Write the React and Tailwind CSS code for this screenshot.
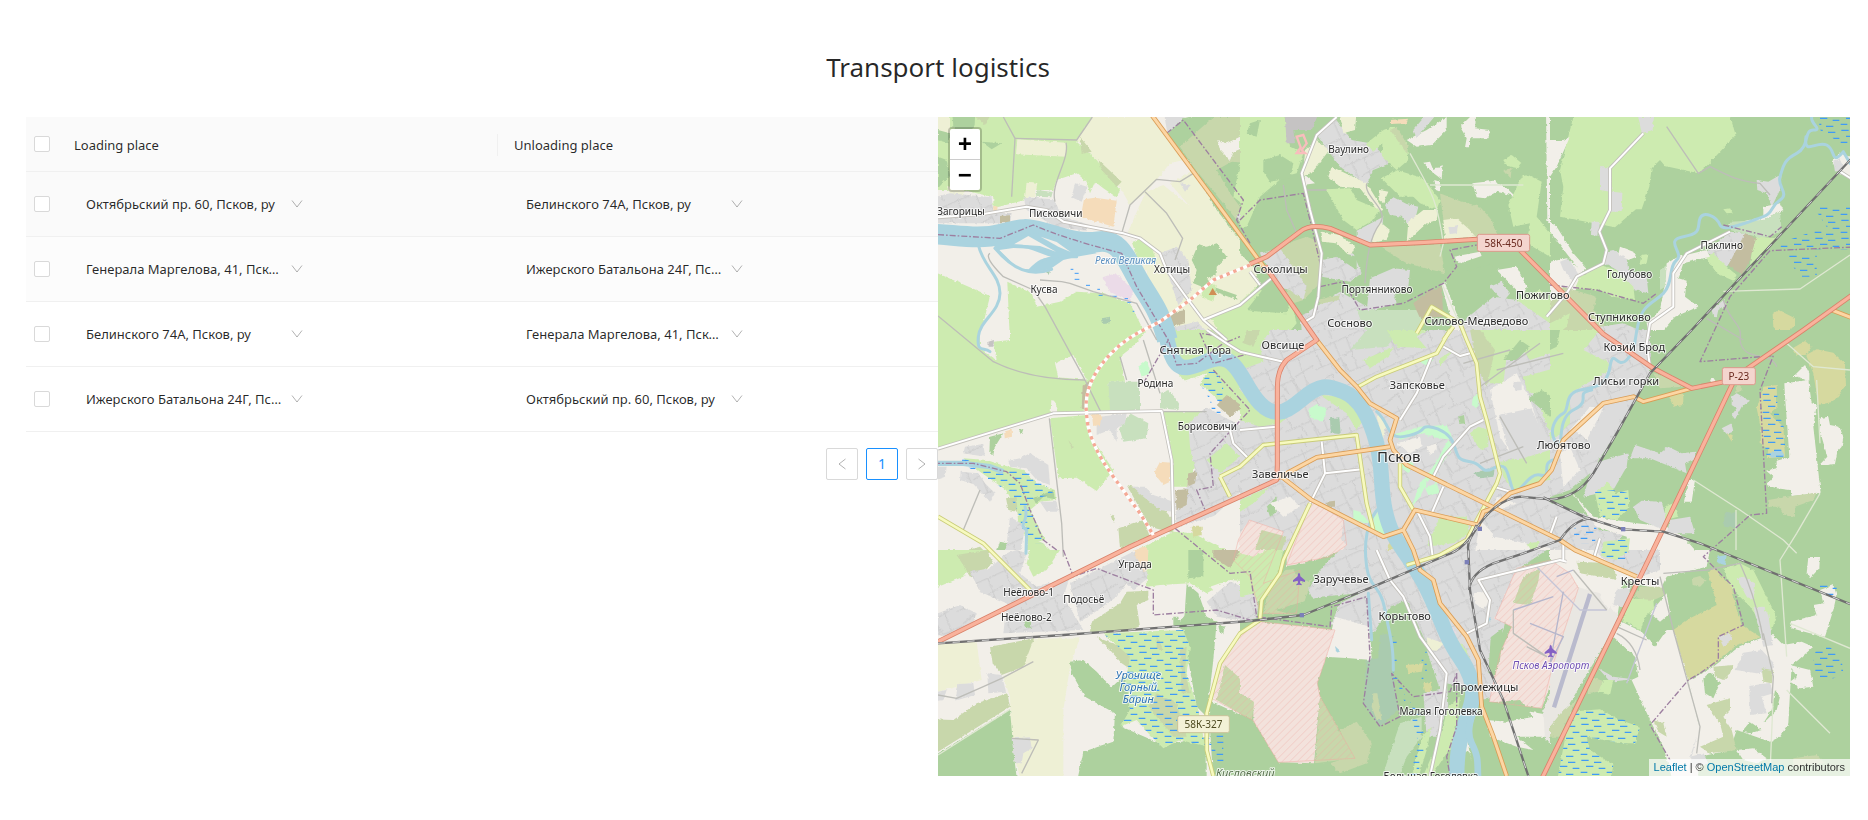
import React from "react";

/* ---------- Map data: one unit is a third of a pixel ---------- */

const FILL = {
  forest: "#add19e",
  grass: "#cdebb0",
  farm: "#eef0d5",
  land: "#f2efe9",
  scrub: "#c8d7ab",
  heath: "#d6d99f",
  orchard: "#f5dcba",
  industry: "#ebdbe8",
  park: "#c8facc",
  meadow: "#c8e0be",
  cemetery: "#aacbaf",
  pink: "#f3e2dc",
  plain: "#dcdcdc",
  apron: "#e9e7e2",
  stone: "#c5c3c3",
  brown: "#c3bda0",
  town: "url(#streets)",
  water: "#aad3df",
};

const LAND = [
  {
    at: "translate(0 0)",
    areas: [
      ["land", "0,0 960,0 960,700 0,700"],
      ["grass", "0,0 487,21 440,100 395,160 370,240 310,240 285,270 190,295 190,262 100,240 0,240"],
      ["farm", "0,0 60,0 60,70 40,90 0,80"],
      ["farm", "262,88 408,98 408,140 258,133"],
      ["farm", "290,215 322,218 316,262 285,262"],
      ["meadow", "322,240 368,246 364,262 318,260"],
      ["farm", "487,21 665,21 960,430 960,700 720,700 690,580 640,470 655,400 580,370 600,285 575,240 500,150 440,90"],
      ["land", "760,150 790,180 720,220 780,290 700,225 650,245 720,160"],
      ["land", "600,285 645,250 590,375 560,370"],
      ["grass", "440,95 500,150 570,240 560,262 520,235 495,215 480,250 470,215 440,190 380,210 370,200 410,130"],
      ["scrub", "450,80 485,125 455,132"],
      ["scrub", "505,150 575,215 560,230 515,180"],
      ["forest", "66,0 136,0 134,45 105,92 70,50"],
      ["scrub", "110,0 190,0 165,45"],
      ["forest", "155,95 215,100 185,118"],
      ["forest", "24,140 50,150 60,195 24,235"],
      ["forest", "24,60 60,70 55,100 24,90"],
      ["farm", "50,228 105,240 100,262 60,250"],
      ["plain", "700,0 780,0 735,65 712,68"],
      ["forest", "712,72 760,25 870,0 960,0 960,430 860,300 780,160"],
      ["scrub", "850,21 960,21 960,160 905,155 860,180 900,250 930,290 920,330 790,170 750,110"],
      ["land", "862,90 890,100 930,80 935,115 912,125 900,150 870,120"],
      ["grass", "930,160 960,140 960,300 910,260"],
      ["plain", "920,320 960,270 960,360 940,350"],
      ["forest", "805,402 830,410 860,400 890,440 860,470 860,495 830,505 850,530 920,555 922,570 840,540 790,520 800,480 785,450"],
      ["grass", "830,520 860,525 850,575 810,560"],
      ["grass", "605,395 640,385 665,410 680,460 620,440"],
      ["town", "690,430 740,410 775,450 785,540 745,585 720,510"],
      ["grass", "840,620 960,575 960,700 880,690"],
      ["brown", "720,610 765,600 765,640 725,650"],
      ["town", "720,655 800,635 870,700 700,700"],
      ["grass", "0,480 180,558 165,620 145,700 0,700"],
      ["grass", "232,515 305,550 320,590 390,575 440,545 520,550 600,580 640,660 655,700 240,700"],
      ["town", "0,265 60,250 185,262 190,305 245,310 240,340 0,340"],
      ["town", "280,262 370,268 400,320 480,345 470,362 380,352 290,300"],
      ["brown", "210,318 240,316 240,338 210,340"],
      ["plain", "435,220 472,230 455,275 425,262"],
      ["orchard", "462,268 495,263 560,272 550,350 500,335 452,322"],
      ["orchard", "190,288 206,290 204,306 190,306"],
      ["plain", "750,220 782,225 765,245"],
      ["industry", "518,502 555,489 610,540 600,575 540,545"],
      ["cemetery", "515,625 540,620 540,640 520,642"],
      ["cemetery", "342,486 360,484 356,494"],
    ],
  },
  {
    at: "translate(930 0)",
    areas: [
      ["forest", "0,0 960,0 960,700 0,700"],
      ["grass", "0,0 130,0 150,110 190,130 170,190 130,200 60,260 20,350 0,350"],
      ["forest", "70,150 120,135 160,160 150,205 90,215 70,185"],
      ["forest", "30,40 60,30 50,80 20,70"],
      ["stone", "135,20 240,0 215,60 160,60 165,100 140,100"],
      ["farm", "195,120 230,90 268,120 215,190 190,195"],
      ["land", "195,195 225,220 190,225"],
      ["town", "230,75 285,25 335,90 390,100 460,155 400,180 380,225 300,170 270,130"],
      ["farm", "297,0 350,0 345,60 310,70"],
      ["farm", "275,170 380,220 430,300 415,305 360,235 300,230 265,200"],
      ["grass", "425,205 470,180 550,205 600,270 590,300 540,280 520,260 480,260"],
      ["grass", "258,238 330,235 350,270 420,300 400,330 350,360 310,330"],
      ["grass", "430,60 460,50 500,100 505,150 470,180 425,140"],
      ["grass", "380,100 430,60 440,90 400,125"],
      ["scrub", "450,60 470,50 505,110 500,130"],
      ["land", "500,90 560,60 620,21 620,60 575,105 530,110"],
      ["plain", "520,60 570,0 600,0 530,85"],
      ["orchard", "450,30 505,26 500,40 450,42"],
      ["land", "660,50 690,21 708,21 705,55 750,60 745,85 690,85 690,112 675,112 680,85"],
      ["land", "550,158 570,155 580,180 608,165 605,208 575,185"],
      ["land", "583,210 600,215 600,245 588,240"],
      ["land", "697,220 760,212 800,235 825,258 770,245 735,265 710,262"],
      ["grass", "790,150 815,135 845,160 835,175 800,168"],
      ["scrub", "790,180 815,175 812,205"],
      ["land", "918,0 930,0 935,130 960,130 940,210 935,320 960,350 960,370 922,335"],
      ["grass", "805,285 845,200 865,195 905,215 890,320 940,380 930,440 860,400 870,340 820,350"],
      ["scrub", "600,250 650,270 720,290 755,330 772,375 640,385 610,330"],
      ["farm", "610,330 650,325 690,360 710,385 615,388"],
      ["plain", "625,352 655,345 650,370 630,372"],
      ["plain", "435,285 460,262 500,282 535,290 525,330 505,345 485,320 450,315"],
      ["farm", "420,240 445,245 430,280 416,270"],
      ["farm", "550,300 595,300 590,330 560,340 500,395 505,335"],
      ["plain", "350,362 430,320 425,370 385,405 350,395"],
      ["farm", "420,335 450,360 440,390 390,400"],
      ["farm", "245,365 300,375 345,410 330,440 290,400 245,395"],
      ["scrub", "110,410 200,380 240,395 240,520 190,570 130,590 150,500"],
      ["town", "60,430 120,415 200,530 190,570 150,540 110,530"],
      ["town", "245,450 340,430 365,490 330,515 245,500"],
      ["forest", "245,410 350,440 350,480 290,440"],
      ["scrub", "420,410 600,400 615,490 500,460"],
      ["plain", "390,505 460,475 510,480 505,530 460,545 470,580 380,605"],
      ["town", "180,620 300,545 400,600 400,700 190,700"],
      ["scrub", "230,570 300,555 295,570 240,582"],
      ["meadow", "350,600 560,600 520,700 390,700"],
      ["brown", "520,580 560,545 605,530 610,620 540,625"],
      ["grass", "0,500 60,540 150,560 170,640 120,700 0,700"],
      ["forest", "20,600 90,510 150,570 140,610 60,605"],
      ["farm", "0,430 40,470 60,520 0,575"],
      ["land", "640,440 720,425 725,438 660,460"],
      ["land", "770,480 830,470 860,530 850,560 790,500"],
      ["land", "605,525 615,520 680,690 650,690"],
      ["town", "680,625 760,560 830,570 960,600 960,700 640,700"],
      ["forest", "620,500 760,460 740,560 690,600 660,580"],
      ["plain", "750,530 785,515 810,550 790,575"],
      ["grass", "830,570 900,540 960,600 930,640"],
    ],
  },
  {
    at: "translate(1860 0)",
    areas: [
      ["forest", "0,0 960,0 960,700 0,700"],
      ["grass", "75,0 535,0 557,75 470,168 445,190 345,168 330,150 305,175 298,230 275,298 258,298 195,352 30,320 40,230 30,180"],
      ["land", "0,90 40,90 60,80 20,170 0,200"],
      ["plain", "265,21 312,21 308,60 275,70"],
      ["plain", "150,172 180,172 185,245 217,248 215,305 180,305 180,245 150,240"],
      ["plain", "125,335 150,335 145,378 123,375"],
      ["land", "0,335 20,350 70,430 110,475 95,490 0,365"],
      ["plain", "620,210 655,215 695,192 690,240 665,290 650,250 622,240"],
      ["land", "640,290 690,280 700,300 640,330 560,345 530,345 640,320"],
      ["meadow", "540,335 640,330 690,305 695,365 640,385 540,360"],
      ["land", "845,155 870,130 900,140 900,200 870,190"],
      ["plain", "850,155 870,145 880,180 855,185"],
      ["town", "470,425 540,365 585,370 590,390 530,470"],
      ["brown", "585,370 620,385 605,430 600,450 575,495 535,465"],
      ["grass", "620,380 680,385 600,465 605,430"],
      ["grass", "467,440 490,430 530,470 560,495 550,512 500,490"],
      ["land", "385,440 470,420 480,440 400,460 385,505 410,512 405,560 445,590 375,620 340,660 300,690 290,640 330,600 345,520 350,460"],
      ["land", "0,455 50,445 90,478 110,500 60,560 0,615"],
      ["plain", "30,455 55,445 90,500 70,515 40,480"],
      ["plain", "165,425 190,420 230,445 235,480 290,500 295,550 250,540 200,480 165,460"],
      ["land", "210,410 250,425 260,440 235,450 205,432"],
      ["grass", "150,465 200,480 250,530 255,570 190,560 150,540 75,535 90,500"],
      ["meadow", "330,480 350,465 345,530 330,540"],
      ["scrub", "0,575 40,530 140,560 130,600 160,640 190,700 0,700"],
      ["grass", "0,640 60,610 50,650 0,690"],
      ["town", "150,650 220,640 280,665 300,700 170,700"],
      ["grass", "275,435 295,432 290,460 268,465"],
      ["grass", "520,298 540,295 548,308 530,310"],
      ["heath", "668,612 685,600 705,610 735,625 735,645 700,680 670,650"],
      ["plain", "485,600 520,570 530,585 505,600 500,622 490,620"],
    ],
  },
  {
    at: "translate(0 660)",
    areas: [
      ["land", "0,0 960,0 960,700 0,700"],
      ["grass", "0,0 650,0 615,45 570,80 585,155 535,155 545,240 375,250 0,362"],
      ["land", "150,0 240,0 240,30 190,35 200,90 150,55"],
      ["stone", "175,35 192,30 190,50 176,50"],
      ["land", "375,100 430,75 470,150 385,142"],
      ["land", "364,210 375,215 385,245 362,248"],
      ["brown", "458,170 480,150 468,245 455,235"],
      ["grass", "360,265 470,255 490,330 550,420 500,483 440,443 385,445"],
      ["meadow", "535,155 630,155 630,240 540,240"],
      ["meadow", "568,295 600,250 655,280 650,325 580,335"],
      ["meadow", "690,190 715,180 748,215 745,240 690,235"],
      ["park", "625,110 650,90 662,130 635,140"],
      ["plain", "500,262 590,250 585,280 560,295 560,335 540,300 500,315"],
      ["orchard", "485,252 515,255 510,285 490,288"],
      ["orchard", "672,430 690,395 722,398 720,455 700,465"],
      ["grass", "700,0 810,0 960,0 960,250 900,240 820,170 760,150 720,100"],
      ["grass", "700,245 800,245 850,250 880,320 800,400 770,470 730,470 728,380"],
      ["land", "830,130 800,180 820,240 760,240 700,150 740,160"],
      ["scrub", "590,465 650,480 730,570 730,610 660,590"],
      ["plain", "605,470 645,470 670,495 730,515 728,545 690,540 640,500"],
      ["town", "775,280 830,230 880,260 960,300 960,460 850,560 740,590 735,510 800,440 780,350"],
      ["grass", "830,390 890,340 930,380 870,430 850,410"],
      ["brown", "735,480 775,478 770,525 740,540"],
      ["brown", "775,430 800,425 795,460 772,470"],
      ["brown", "860,225 890,195 940,230 900,260"],
      ["grass", "730,605 790,610 960,700 530,700 640,650"],
      ["land", "790,580 960,520 960,610 860,600 870,650"],
      ["scrub", "565,595 640,570 660,620 570,655"],
      ["orchard", "620,655 650,650 662,700 635,700"],
      ["grass", "100,385 170,390 215,405 280,420 320,460 375,480 378,510 330,515 300,540 345,630 300,640 265,590 262,540 228,480 150,425"],
      ["scrub", "228,505 260,500 262,545 235,540"],
      ["forest", "310,505 370,480 375,508 340,500 318,522"],
      ["forest", "180,320 220,310 195,350 190,375 178,370"],
      ["orchard", "222,305 245,298 246,320 225,325"],
      ["plain", "235,392 270,385 300,370 355,405 360,465 320,450 290,415 240,410"],
      ["town", "92,425 145,430 165,460 195,490 180,515 130,462 90,450"],
      ["town", "105,350 160,342 165,380 100,370"],
      ["plain", "330,515 380,515 385,545 350,545"],
      ["plain", "24,410 50,410 45,440 24,448"],
      ["town", "240,560 290,590 280,620 265,700 205,700 230,640"],
      ["forest", "210,635 232,640 220,680 195,680"],
      ["grass", "295,620 340,640 400,700 280,700"],
      ["scrub", "90,665 150,650 200,700 70,700"],
      ["heath", "785,590 815,590 815,615 790,620"],
      ["pink", "925,630 960,590 960,690 930,680"],
      ["scrub", "415,330 432,352 425,355"],
      ["scrub", "540,552 555,565 550,578"],
      ["forest", "265,300 280,298 275,312"],
    ],
  },
  {
    at: "translate(930 660)",
    areas: [
      ["town", "0,0 960,0 960,700 0,700"],
      ["grass", "0,0 90,0 60,50 70,95 0,120"],
      ["scrub", "20,0 60,0 40,50 10,40"],
      ["meadow", "330,60 380,0 480,0 440,50"],
      ["grass", "370,90 460,50 450,75 390,115"],
      ["grass", "440,0 560,0 530,20 560,55 470,50"],
      ["grass", "600,85 640,60 600,110"],
      ["grass", "700,0 960,0 960,60 870,90 850,60 800,80 790,160 745,160"],
      ["forest", "790,90 840,30 870,50 830,90"],
      ["scrub", "690,0 720,0 765,60 740,170 715,120"],
      ["grass", "850,140 960,110 960,330 920,290 890,200 860,180"],
      ["forest", "865,205 905,180 935,200 930,260"],
      ["land", "750,180 830,130 870,210 900,300 830,400 780,320"],
      ["plain", "775,255 875,235 925,355 820,402"],
      ["plain", "820,155 845,155 845,180 822,182"],
      ["grass", "780,395 850,385 960,350 960,440 820,480 790,440"],
      ["grass", "0,180 60,240 140,240 250,180 180,230 120,280 60,290 0,270"],
      ["grass", "240,195 310,200 370,270 350,300 320,250"],
      ["park", "205,240 225,225 260,235 250,275 210,262"],
      ["cemetery", "270,265 298,262 302,312 272,310"],
      ["park", "455,315 540,290 620,285 640,330 600,325 540,310 480,330"],
      ["park", "625,330 640,350 600,410 560,460 540,500 515,530 540,460 580,410"],
      ["park", "555,475 590,458 600,490 565,495"],
      ["park", "480,380 520,400 505,430 485,415"],
      ["park", "700,200 720,190 712,235 695,225"],
      ["park", "530,90 580,85 565,110"],
      ["park", "400,560 425,540 440,620 405,600"],
      ["park", "340,540 360,545 390,580 340,575"],
      ["farm", "410,250 440,280 430,320 455,580 440,560 425,400"],
      ["land", "470,340 540,320 545,350 510,370"],
      ["land", "560,350 590,340 590,360 570,375"],
      ["grass", "690,310 715,290 745,300 745,350 720,360"],
      ["forest", "655,260 672,255 675,280 658,282"],
      ["cemetery", "700,430 765,410 760,440 720,445"],
      ["grass", "0,510 90,470 40,520 0,545"],
      ["forest", "80,530 110,500 110,545 90,560"],
      ["land", "90,520 150,500 180,530 130,560"],
      ["brown", "260,515 285,512 285,530 262,530"],
      ["pink", "215,510 310,570 305,630 320,645 270,700 130,700"],
      ["pink", "28,570 130,605 95,700 0,700 0,610"],
      ["scrub", "65,600 140,620 115,690 45,660"],
      ["heath", "455,625 475,680 430,680"],
      ["grass", "600,560 680,560 690,610 640,640 560,650"],
      ["land", "720,570 750,600 760,620 960,660 960,700 700,700"],
      ["land", "770,500 830,520 760,545"],
      ["grass", "860,640 900,635 880,670"],
    ],
  },
  {
    at: "translate(1860 660)",
    areas: [
      ["forest", "0,0 960,0 960,700 0,700"],
      ["town", "60,50 140,10 170,0 300,0 300,130 260,200 200,310 120,430 60,480 0,500 0,300"],
      ["grass", "0,0 150,0 100,60 180,100 170,125 60,190 60,280 20,320 0,330"],
      ["forest", "0,0 30,0 20,50 0,60"],
      ["land", "60,300 120,230 160,235 110,330 90,310"],
      ["plain", "175,215 240,215 150,380 110,360"],
      ["land", "30,370 60,350 90,420 40,470"],
      ["scrub", "310,130 370,140 400,170 330,175"],
      ["heath", "355,195 400,190 400,225 370,230"],
      ["plain", "130,400 235,370 230,410 190,480 100,500"],
      ["plain", "240,385 255,345 330,370 355,350 395,370 435,365 435,385 405,400 410,430 300,385"],
      ["grass", "135,490 175,455 195,490 235,480 238,530 200,570 150,560"],
      ["town", "0,515 60,540 130,560 150,600 220,610 180,700 0,700"],
      ["land", "60,480 130,560 260,580 350,590 400,620 470,700 240,700 230,620 140,590"],
      ["plain", "250,530 275,512 335,515 350,570 340,600 270,570"],
      ["plain", "360,570 420,560 435,610 350,610"],
      ["land", "415,450 435,450 425,515 402,515"],
      ["grass", "345,530 370,520 385,560 345,570"],
      ["grass", "160,635 240,625 230,700 150,700"],
      ["plain", "545,200 560,190 600,212 575,230 555,268 545,255 560,235 545,225"],
      ["plain", "515,295 545,280 550,305 530,312"],
      ["heath", "530,310 548,315 545,335"],
      ["land", "480,150 490,143 498,155 485,160"],
      ["land", "703,160 775,150 785,220 800,225 790,290 812,488 725,498 720,480 680,475 650,465 670,440 648,422 680,415 680,392 718,382 712,290 705,200"],
      ["land", "728,142 765,105 778,130 778,155 745,140"],
      ["land", "808,265 835,260 840,285 868,290 880,320 875,350 862,365 855,402 830,405 808,405 832,380 812,310"],
      ["heath", "768,75 800,58 850,68 885,100 888,165 850,215 805,225 790,130"],
      ["heath", "728,55 765,33 785,50 768,75 740,75"],
      ["heath", "640,170 680,165 682,230 660,250 700,290 705,380 650,385 655,360 632,340 632,290 620,235"],
      ["water", "655,372 690,355 705,378 665,383"],
      ["scrub", "655,510 710,500 800,488 790,510 735,530 735,560 700,555 690,530 655,530"],
      ["cemetery", "525,545 560,550 560,595 520,590"],
      ["scrub", "560,160 580,180 555,190"],
    ],
  },
  {
    at: "translate(0 1320)",
    areas: [
      ["land", "0,0 960,0 960,700 0,700"],
      ["grass", "0,0 190,0 130,40 100,80 0,120"],
      ["scrub", "80,15 170,0 190,40 125,85"],
      ["grass", "290,40 300,0 390,0 350,60 310,80"],
      ["town", "120,65 180,55 230,10 260,0 290,10 270,70 320,110 420,80 400,140 430,190 460,240 220,250 230,160 150,125"],
      ["forest", "280,215 300,210 305,235 285,230"],
      ["town", "24,190 90,165 140,190 130,215 50,260 24,255"],
      ["town", "420,100 520,50 600,10 630,0 665,75 610,120 590,100 560,140 490,190 450,215"],
      ["orchard", "610,0 655,0 660,60 640,65"],
      ["grass", "655,0 960,0 960,95 900,90 830,130 780,100 690,105 650,110"],
      ["forest", "775,0 820,0 820,80 775,85"],
      ["brown", "850,0 930,0 900,55 850,20"],
      ["scrub", "485,215 570,160 590,125 655,122 655,150 620,165 630,230 590,245 480,248"],
      ["forest", "770,100 805,130 830,200 860,215 850,330 830,500 800,470 760,250"],
      ["land", "840,110 870,100 960,90 960,130 880,150"],
      ["town", "830,155 900,95 960,120 960,215 860,200"],
      ["farm", "0,285 140,275 155,390 0,432"],
      ["farm", "310,268 450,262 420,350 400,480 400,700 275,700 245,590 240,440 220,380 275,350"],
      ["scrub", "180,290 312,265 280,350 215,375 188,340"],
      ["plain", "85,402 130,400 135,435 75,452"],
      ["plain", "172,370 215,375 228,425 175,430"],
      ["plain", "24,425 50,420 40,450 24,452"],
      ["scrub", "0,508 70,510 140,460 232,430 240,470 0,620"],
      ["forest", "0,625 240,478 250,600 262,700 0,700"],
      ["plain", "245,565 300,562 305,595 280,610 275,640 255,640"],
      ["forest", "420,335 460,330 500,365 545,412 590,370 600,480 575,530 700,585 830,560 830,700 440,700 460,605 550,575 555,490 465,440 425,370"],
      ["forest", "865,225 885,230 880,250 868,245"],
      ["scrub", "500,262 600,300 605,360 575,340 540,300"],
      ["grass", "518,250 760,240 780,290 770,370 805,480 825,588 750,570 700,595 655,550 620,510 570,530 600,480 585,400 600,320"],
      ["scrub", "680,430 740,460 770,560 730,560 655,470"],
      ["scrub", "680,255 700,300 680,300"],
      ["scrub", "750,300 770,290 765,370 780,430 755,430"],
      ["forest", "730,200 745,200 748,215 770,190 800,210 760,240 730,225"],
      ["pink", "960,238 900,300 870,345 845,440 960,508"],
      ["scrub", "885,345 925,380 960,460 960,508 860,450"],
      ["forest", "835,450 960,508 960,700 850,700"],
    ],
  },
  {
    at: "translate(930 1320)",
    areas: [
      ["forest", "0,0 960,0 960,700 0,700"],
      ["grass", "0,0 130,0 115,70 60,150 0,190"],
      ["pink", "0,0 80,0 40,20 0,10"],
      ["town", "0,140 40,130 55,160 50,205 0,215"],
      ["pink", "140,0 310,0 200,40 140,48"],
      ["scrub", "90,100 140,60 220,50 215,90 180,195 70,190"],
      ["forest", "160,60 210,30 240,50 230,80 190,100"],
      ["town", "205,120 240,60 300,0 480,0 560,110 700,380 700,420 620,400 550,260 500,150 450,170 400,250 300,245 240,190"],
      ["forest", "105,180 240,140 360,130 300,160 270,230 180,200"],
      ["town", "520,0 920,0 830,60 790,240 750,330 780,440 720,450 690,340 600,180"],
      ["land", "285,200 390,230 395,330 330,325 255,320"],
      ["water", "285,288 300,302 288,305"],
      ["meadow", "480,520 545,500 545,560 500,620 470,700 420,700"],
      ["cemetery", "380,330 415,325 420,255 450,250 465,420 475,480 420,530 370,462"],
      ["scrub", "400,430 412,430 425,510 410,510 395,470"],
      ["heath", "500,345 550,340 545,365 505,370"],
      ["heath", "550,400 575,395 575,430 555,425"],
      ["farm", "560,262 612,280 590,302 565,300"],
      ["town", "560,300 620,370 625,470 590,560 560,560 550,430 600,420"],
      ["grass", "625,470 660,440 640,580 560,700 540,700 600,560"],
      ["grass", "545,560 575,530 560,600 530,700 510,700"],
      ["pink", "0,245 60,215 180,228 285,240 232,400 240,440 222,640 115,637 40,512 40,455 0,430"],
      ["scrub", "240,440 345,625 225,640"],
      ["scrub", "0,430 42,456 36,508 0,492"],
      ["scrub", "300,540 350,515 395,580 380,640 300,670 270,640 330,620"],
      ["pink", "830,55 960,30 960,330 905,475 748,455 780,310 815,230 765,205"],
      ["scrub", "850,80 900,55 895,95 870,165 820,160"],
      ["forest", "752,262 788,235 780,330 760,380 745,370"],
      ["land", "700,130 740,125 750,150 730,180 705,160"],
      ["water", "745,200 752,205 745,220"],
      ["land", "735,480 840,480 960,500 960,560 830,560 880,600 830,590 750,560"],
      ["forest", "720,460 840,450 880,500 800,515 740,510"],
      ["apron", "910,480 930,430 960,420 960,600 915,570"],
      ["grass", "630,250 680,300 690,345 660,320"],
      ["industry", "600,180 650,250 620,250"],
      ["land", "680,440 700,450 695,500 680,490"],
      ["land", "670,600 680,560 695,640 690,610"],
    ],
  },
  {
    at: "translate(1860 1320)",
    areas: [
      ["forest", "0,0 960,0 960,700 0,700"],
      ["land", "0,0 480,0 470,50 350,80 330,120 220,90 200,210 60,90 0,80"],
      ["town", "130,0 330,0 330,60 260,85 190,50"],
      ["grass", "150,0 240,0 200,30 160,20"],
      ["apron", "80,110 150,130 210,205 0,560 0,110"],
      ["pink", "0,30 60,70 85,115 10,340 0,340"],
      ["scrub", "80,35 190,40 200,90 150,80 90,70"],
      ["land", "150,80 190,95 180,180 155,150"],
      ["plain", "200,120 240,110 235,175 190,165"],
      ["scrub", "270,110 330,110 345,135 300,155 250,140"],
      ["grass", "215,210 245,145 310,150 312,175 285,200 272,242"],
      ["land", "275,245 315,290 350,240 370,240 415,390 445,520 445,700 370,700 340,590 300,510 245,390 265,380 255,320 190,260 215,215"],
      ["land", "300,190 350,130 360,190 330,215"],
      ["plain", "145,355 190,380 250,388 180,395"],
      ["grass", "160,390 190,390 180,435 140,425"],
      ["scrub", "120,380 158,392 145,425 110,430"],
      ["grass", "60,485 150,478 210,510 270,530 255,580 210,580 110,560 120,600 190,645 180,700 20,700"],
      ["scrub", "0,560 30,560 60,490 80,450 40,480 0,530"],
      ["grass", "520,55 570,40 610,60 650,140 680,200 665,240 640,230 600,170 540,110"],
      ["plain", "560,85 580,80 615,100 612,150 590,140"],
      ["heath", "370,240 420,205 500,165 475,70 490,50 545,110 560,180 575,225 632,262 560,285 490,345 415,390"],
      ["forest", "545,130 600,170 620,230 580,220"],
      ["water", "500,20 530,15 525,45 505,40"],
      ["plain", "505,258 540,248 545,270 520,290"],
      ["scrub", "425,85 450,78 470,90 450,110 428,105"],
      ["land", "415,392 490,350 570,288 640,262 670,255 700,285 755,275 790,290 745,330 725,345 720,430 715,520 690,560 660,575 560,540 540,600 450,620 430,700 445,520"],
      ["plain", "610,172 640,170 655,195 668,285 640,290"],
      ["plain", "580,308 635,300 672,340 665,365 620,370 557,360"],
      ["plain", "598,408 660,398 670,430 635,440 650,490 600,495"],
      ["plain", "440,560 420,620 460,610 475,640 415,660"],
      ["scrub", "490,350 550,345 540,370 520,390 495,380"],
      ["scrub", "470,465 540,445 540,480 520,500 545,540 560,600 480,610 450,590 520,560 510,520 480,480"],
      ["scrub", "635,355 670,360 665,400 640,395"],
      ["forest", "460,385 480,365 510,400 490,445 465,430"],
      ["forest", "575,545 600,515 635,540 600,550"],
      ["forest", "640,520 680,480 690,440 675,420 665,480"],
      ["land", "720,215 800,195 790,165 820,160 810,120 850,105 860,135 850,180 825,260 780,250 725,235"],
      ["land", "720,345 780,360 790,410 750,415 720,395 740,380"],
      ["forest", "790,310 830,280 875,330 880,370 830,395 790,375"],
      ["land", "775,21 810,21 808,55 780,85 770,70"],
      ["land", "560,600 610,595 650,625 620,640 580,630"],
      ["scrub", "730,625 800,615 825,640 730,650"],
      ["scrub", "310,510 340,520 350,560 325,545"],
    ],
  },
];

const MARSH = [
  "M2665,20H2770V105H2740L2670,60Z",
  "M2650,290H2770V420H2545L2560,395L2690,350Z",
  "M2562,430H2660V500H2610Z",
  "M2500,825H2542V900L2565,960V1040H2510L2490,900Z",
  "M1995,1145L2060,1140L2095,1150L2090,1210L2020,1225Z",
  "M1935,1245H2000L1995,1300H1930Z",
  "M2015,1290H2100L2085,1350H2015Z",
  "M60,1030L190,1080L290,1080L350,1130L370,1150L310,1170L310,1230L350,1300H290L262,1200L228,1140L140,1090Z",
  "M518,1570L760,1560L780,1610L770,1690L805,1800L825,1908L750,1890L700,1915L655,1870L620,1830L570,1850L600,1800L585,1720L600,1640Z",
  "M1920,1805L2010,1798L2130,1850L2115,1900L2070,1900L1970,1880L1980,1920L2050,1965L2040,2020L1880,2020Z",
  "M2650,1630L2690,1600L2735,1650L2740,1690L2690,1715L2650,1695Z",
  "M1385,1580H1400L1400,1680L1425,1760L1480,1820L1485,1920L1460,2000H1440L1465,1900L1440,1800L1390,1720Z",
  "M1475,1620H1490V1710H1475Z",
  "M825,1870L880,1850L880,1960H860Z",
  "M2650,1420H2720V1460H2680Z",
  "M830,785H860L880,830L870,920H850L840,870L815,830Z",
];

const MILITARY = [
  "M930,1565L990,1535L1110,1548L1215,1560L1162,1720L1170,1760L1275,1945L1045,1957L970,1832L845,1765L870,1665L900,1610Z",
  "M1145,1170L1240,1230L1250,1305L1200,1340L1070,1365Z",
  "M958,1230L1060,1265L1000,1420L1110,1380L1100,1510L990,1510L960,1400L910,1350L925,1290Z",
  "M1760,1375L1860,1350L1920,1390L1945,1435L1870,1660L1835,1795L1678,1775L1710,1630L1745,1550L1695,1525Z",
];

const STREAMS = [
  "M145,405C160,470 210,495 210,550S150,630 145,680S160,710 180,725",
  "M195,415C250,480 300,500 365,478",
  "M240,408C320,405 320,430 380,440H440",
  "M300,480C340,440 350,450 380,440",
  "M1340,905C1370,930 1370,960 1390,975S1470,970 1480,955S1555,960 1570,1000S1580,1050 1620,1055S1650,1095 1690,1075S1730,1080 1745,1130S1790,1085 1830,1095S1830,1060 1870,1050S1870,930 1930,900S1930,850 1985,840",
  "M1880,1000C1850,960 1880,920 1900,910S1900,850 1950,840S2030,830 2040,770S2060,780 2090,750S2110,700 2125,640S2170,580 2200,550S2215,470 2240,450S2200,390 2260,380S2300,350 2310,325S2360,320 2370,345S2470,330 2500,320S2520,290 2550,270S2540,230 2550,200S2560,150 2600,130S2620,60 2650,60S2640,40 2645,21",
  "M2628,80C2620,140 2660,90 2690,105S2700,170 2740,125L2760,160",
  "M1350,1190C1310,1230 1300,1300 1310,1370S1350,1420 1365,1500S1390,1600 1390,1680",
  "M1315,1450L1325,1590",
  "M285,1190C300,1240 260,1240 290,1260L288,1330",
];

const MINOR = [
  "M220,21L255,85L245,260",
  "M487,21L440,90L255,85",
  "M408,98C420,150 360,220 375,275",
  "M575,370L600,285L680,208L750,215L790,190",
  "M645,245L710,310L758,385L735,450",
  "M24,618L190,755Q300,810 465,810",
  "M310,540L345,590L465,810L512,905",
  "M180,430Q160,440 220,500L310,540",
  "M330,510L395,515L420,520L490,545L620,580L680,690",
  "M358,925L395,1240L400,1340",
  "M150,1140L100,1260",
  "M24,1755L80,1765L160,1730L215,1705L310,1655",
  "M275,1990L325,1890L245,1885",
  "M570,740L590,810M640,690L690,850",
  "M700,905H830",
  "M1060,225L1070,300L1100,370M1120,240H1190",
  "M1310,220C1300,260 1380,300 1350,340S1310,440 1305,520",
  "M2210,50L2305,190L2340,170C2400,200 2430,215 2490,220L2520,255",
  "M2330,625L2440,690M2380,570C2400,640 2440,640 2430,690C2440,760 2520,720 2540,770",
  "M2190,1400L2230,1560L2310,1850L2300,1930",
  "M2500,1570L2530,1700L2525,1780",
  "M2200,1390L2330,1380L2430,1360Q2480,1470 2500,1590",
  "M2060,1550L2150,1590M2060,1570Q2120,1600 2130,1680",
  "M1750,1500V1570L1850,1640L1790,1610",
  "M1930,1380L2030,1500",
  "M1700,780L1900,730M1650,1060L1780,1010M1600,760L1740,720",
  "M1650,830L1830,700M1710,920L1790,1060",
];

const TRACKS = [
  "M1440,130C1500,240 1520,260 1540,400L1530,440",
  "M1500,225H1780",
  "M2380,544L2610,537L2760,435",
  "M2570,700L2650,770L2760,780",
  "M2290,1110L2430,1200L2560,1290L2600,1330",
  "M2670,1150L2600,1270L2550,1350L2570,1640",
  "M2570,1740L2700,1870M2580,1540L2760,1615M2530,1750L2520,1990",
  "M1535,520L1610,690M2660,810L2670,1000",
  "M24,1935L240,1798",
  "M2418,1200V1320",
];

const BORDERS = [
  "M24,374L210,385L310,345Q400,385 575,430L620,530L715,690L740,765L800,760L880,700L930,680",
  "M640,820L715,690",
  "M710,70L760,30L940,270L920,330L960,400",
  "M930,330L990,270L1120,250L1145,350L1175,480L1160,600",
  "M1170,530L1240,515L1290,600L1420,580L1540,520L1580,470L1560,420L1640,405",
  "M2380,345L2520,380L2555,350",
  "M1860,525L2000,540L2140,580L2180,550",
  "M2800,410L2520,422L2400,560L2310,755L2530,737L2490,840L2510,1210L2460,1215L2400,1270L2320,1340L2410,1430L2440,1545L2365,1580L2365,1650L2310,1690L2275,1710L2160,1845L2220,1950",
  "M850,780L960,900L840,1030L850,1130L800,1140L825,1200",
  "M400,1320L430,1400L500,1375L670,1440V1515L860,1500L960,1530",
  "M380,1320L340,1290L300,1200L270,1120L230,1085L130,1060H24",
  "M735,1255L900,1390L960,1385L980,1520L1200,1550L1205,1490L1310,1460L1320,1640L1300,1780L1350,1850L1410,1820L1385,1690L1450,1760L1560,1745L1580,1690",
  "M1580,1690L1580,1850L1550,1940L1560,1998",
  "M880,680L810,670L850,760L960,730",
];

const WHITE = [
  "M24,322L160,312L290,290L350,300L400,335L580,370L630,385L690,430L710,480L775,570L820,630L890,690",
  "M820,630L930,585L1000,525L1030,500M990,525L960,485",
  "M1220,21L1160,75L1115,190L1140,300L1175,430L1165,560L1150,620L1125,635",
  "M24,1016L370,910L695,903L725,1050L730,1250",
  "M1505,740L1460,850L1410,930",
  "M1660,930L1620,950L1540,1040L1505,1110",
  "M1175,995L1185,1090L1140,1180M1185,1090L1295,1078",
  "M930,725L1060,755M930,960L1040,950M830,960H900L910,1000L960,1050",
  "M1540,1130L1505,1210M1460,1200L1500,1280L1508,1340",
  "M1340,1320L1380,1410L1420,1460L1470,1580L1550,1690L1530,1860L1500,1998",
  "M1610,1570L1670,1540L1680,1470L1645,1410L1890,1350L1910,1355",
  "M2140,70L2040,175V300L2008,365L2030,420L2020,460L1940,500L1910,550L1850,620",
  "M2400,365L2270,430L2230,490V590L2160,640L2150,700L2160,770",
  "M1540,710L1590,738L1620,730M1690,1130L1740,1145",
  "M1860,1275L1880,1220M2010,1285L1990,1350M1900,1300V1350",
  "M2730,185L2770,210M830,660L890,700L930,725",
];

const YELLOW = [
  "M870,1100L900,1160M870,1100L930,1070L1000,1005L1280,975L1310,1180L1330,1260",
  "M1560,660L1520,730L1340,800L1285,830",
  "M1460,670L1505,590L1590,640L1610,690L1640,760L1650,860L1670,930L1710,1090L1700,1120L1630,1250L1610,1290L1530,1335L1430,1365",
  "M1540,690L1570,650",
  "M1410,1060V1130L1450,1200",
  "M1140,1180L1060,1350L1050,1390L995,1470L990,1530L930,1570L870,1660L830,1810V1920L850,1998",
  "M24,1220L160,1300L300,1440",
];

const ORANGE = [
  "M660,8L1012,485",
  "M1160,690L1230,780L1280,830L1320,880L1400,925L1380,990L1390,1020L1430,1065L1890,1290L1935,1320L2120,1400",
  "M1042,1105L1160,1042L1380,1010",
  "M1048,1095L1145,1170L1360,1280L1420,1260L1455,1200L1645,1245L1660,1205L1690,1195L1740,1150L1830,1120L1865,1080L1900,990L2020,880L2110,860L2140,875L2285,835",
  "M1420,1260L1450,1320L1470,1380L1510,1410L1530,1480L1610,1580L1645,1650L1655,1790L1690,1880L1730,1998",
  "M2705,600L2770,625",
];

const RED = [
  "M1005,468L1160,690L1070,750Q1042,780 1042,830V1070L1040,1110L930,1160L600,1310L24,1595",
  "M960,462L1010,440L1110,365Q1140,340 1200,355L1320,405L1470,398L1640,388H1720L1770,420L2020,672L2170,775L2285,835L2400,812L2620,660L2765,556",
  "M2420,795L2270,1110L2155,1350L1836,2005",
];

const RAIL = [
  "M2765,145L2285,660L2160,790L2060,970L1990,1090Q1940,1165 1860,1168L1770,1160Q1690,1170 1630,1270Q1610,1300 1615,1320L1620,1440L1650,1620L1720,1770L1795,1998",
  "M1840,1162L1960,1220L2080,1258L2200,1265L2310,1300L2765,1484",
  "M1980,1225Q1930,1230 1890,1290L1780,1330L1690,1360Q1620,1390 1618,1440",
  "M24,1600L400,1575L960,1533L1120,1515L1330,1430L1550,1335Q1610,1315 1640,1245",
];

const PLACES = [
  ["Загорицы", 93, 315, 30],
  ["Писковичи", 377, 321, 30],
  ["Кусва", 342, 549, 30],
  ["Хотицы", 726, 489, 30],
  ["Ваулино", 1256, 128, 30],
  ["Соколицы", 1052, 490, 33],
  ["Портянниково", 1341, 549, 30],
  ["Сосново", 1259, 650, 33],
  ["Силово-Медведово", 1639, 644, 33],
  ["Пожигово", 1838, 568, 33],
  ["Паклино", 2375, 418, 30],
  ["Голубово", 2099, 504, 30],
  ["Ступниково", 2068, 634, 33],
  ["Снятная Гора", 796, 731, 33],
  ["Родина", 676, 831, 30],
  ["Борисовичи", 832, 961, 30],
  ["Овсище", 1059, 718, 33],
  ["Запсковье", 1462, 838, 33],
  ["Псков", 1406, 1056, 45],
  ["Завеличье", 1051, 1104, 33],
  ["Любятово", 1901, 1017, 33],
  ["Козий Брод", 2113, 722, 33],
  ["Лисьи горки", 2088, 825, 33],
  ["Уграда", 615, 1374, 30],
  ["Неёлово-1", 296, 1457, 30],
  ["Подосьё", 461, 1479, 30],
  ["Неёлово-2", 289, 1534, 30],
  ["Заручевье", 1233, 1418, 33],
  ["Корытово", 1424, 1530, 33],
  ["Промежицы", 1666, 1742, 33],
  ["Малая Гоголевка", 1533, 1814, 30],
  ["Большая Гоголевка", 1503, 2009, 30],
  ["Кресты", 2130, 1424, 33],
];

const ITALIC_PLACES = [
  ["Река Великая", 587, 462, 30, "#5b8fc0"],
  ["Урочище", 625, 1708, 33, "#2f74b5"],
  ["Горный", 625, 1744, 33, "#2f74b5"],
  ["Барин", 625, 1780, 33, "#2f74b5"],
  ["Кисловский", 946, 2001, 33, "#5a7350"],
  ["Псков Аэропорт", 1863, 1677, 30, "#6f4fb5"],
];

const SHIELDS = [
  ["58К-450", 1642, 373, 157, "#f4d5ce", "#dc9a8c", "#6b2a20"],
  ["Р-23", 2377, 773, 99, "#f4d5ce", "#dc9a8c", "#6b2a20"],
  ["58К-327", 743, 1817, 155, "#f3f1d6", "#c9c39a", "#4d4a20"],
];

function Lines({ paths, color, width, dash, cap = "butt" }) {
  return (
    <g fill="none" stroke={color} strokeWidth={width} strokeDasharray={dash} strokeLinejoin="round" strokeLinecap={cap}>
      {paths.map((d) => (
        <path key={d} d={d} />
      ))}
    </g>
  );
}

function Road({ paths, casing, color, width }) {
  return (
    <>
      <Lines paths={paths} color={casing} width={width + 5} />
      <Lines paths={paths} color={color} width={width} />
    </>
  );
}

function Plane({ x, y }) {
  return (
    <path
      transform={`translate(${x} ${y})`}
      fill="#8461c4"
      d="M0,-19Q4,-17 4,-8L18,4V9L4,5L3,12L8,16V19L0,17L-8,19V16L-3,12L-4,5L-18,9V4L-4,-8Q-4,-17 0,-19Z"
    />
  );
}

const MAIN_RIVER_TOP = ["M10,372C80,375 150,390 215,372S290,355 340,368S440,405 505,395S590,450 625,510S690,600 712,690"];
const MAIN_RIVER = [
  "M705,660C720,740 735,778 775,772S850,735 890,750S950,840 990,880S1060,915 1115,868S1190,825 1240,845S1320,925 1340,1000S1350,1130 1365,1200S1400,1290 1440,1350S1500,1450 1540,1550S1600,1640 1620,1700S1620,1790 1605,1840S1580,1920 1580,2010",
];
const BYPASS = [
  "M960,465L850,510L780,570L690,635L640,660Q560,700 510,770T470,910Q470,990 550,1100L630,1210L670,1275",
];

function PskovMap() {
  return (
    <svg
      className="absolute inset-0 h-full w-full"
      viewBox="24 21 2736 1977"
      preserveAspectRatio="xMidYMid slice"
      role="img"
      aria-label="Псков"
    >
      <defs>
        <pattern id="streets" width="158" height="134" patternUnits="userSpaceOnUse" patternTransform="rotate(-24)">
          <rect width="158" height="134" fill="#dcdcdc" />
          <path
            d="M0,14H158M0,68H84L92,114H158M22,0V68M84,14V134M124,14L118,114M0,108L40,98V134M50,68L56,104M94,62L158,52"
            fill="none"
            stroke="#cccccc"
            strokeWidth="3"
          />
        </pattern>
        <pattern id="marsh" width="78" height="54" patternUnits="userSpaceOnUse">
          <path d="M4,7H26M42,13H64M18,25H40M56,31H76M2,43H22M36,49H58" stroke="#3f9bf7" strokeWidth="4" />
        </pattern>
        <pattern id="hatch" width="16" height="16" patternUnits="userSpaceOnUse" patternTransform="rotate(45)">
          <path d="M0,0V16" stroke="#f0a8a0" strokeWidth="3" />
        </pattern>
        <filter id="ragged" x="0" y="0" width="100%" height="100%">
          <feTurbulence type="fractalNoise" baseFrequency="0.09" numOctaves="3" seed="4" result="noise" />
          <feDisplacementMap in="SourceGraphic" in2="noise" scale="9" xChannelSelector="R" yChannelSelector="G" />
        </filter>
      </defs>

      <rect x="0" y="0" width="2800" height="2020" fill="#f2efe9" />
      <g filter="url(#ragged)">
        {LAND.map((tile) => (
          <g key={tile.at} transform={tile.at}>
            {tile.areas.map(([kind, points]) => (
              <polygon key={points} points={points} fill={FILL[kind]} />
            ))}
          </g>
        ))}
      </g>

      <g fill="url(#marsh)">
        {MARSH.map((d) => (
          <path key={d} d={d} />
        ))}
      </g>
      <g fill="url(#hatch)" fillOpacity="0.55" stroke="#f0a8a0" strokeWidth="2" strokeOpacity="0.7">
        {MILITARY.map((d) => (
          <path key={d} d={d} />
        ))}
      </g>

      <Lines paths={["M1980,1452L1872,1792"]} color="#b9bacd" width={13} />
      <Lines paths={["M2090,1720L2180,1480M1820,1370L1950,1500L2030,1500"]} color="#c4c5d6" width={4} />
      <Lines paths={["M1900,1445L1860,1660L1900,1580L1800,1540M1880,1400L1930,1380M1750,1500L1870,1460"]} color="#b5b6cc" width={4} />

      <Lines paths={MAIN_RIVER_TOP} color="#aad3df" width={62} />
      <Lines paths={MAIN_RIVER} color="#aad3df" width={46} />
      <path d="M320,370L460,400L500,430L440,440L400,450L360,478L300,488L240,455L190,415L205,390Z" fill="#aad3df" />
      <path d="M208,420L250,414L310,416L370,438L340,446L300,478L265,476Z" fill="#f2efe9" />
      <path d="M252,403L295,378L378,425L330,408Z" fill="#f2efe9" />
      <path d="M332,380L380,396L422,426L385,410Z" fill="#f2efe9" />
      <Lines paths={["M1620,1740C1645,1800 1600,1850 1625,1900S1640,1960 1645,2010"]} color="#aad3df" width={20} />
      <Lines paths={STREAMS} color="#aad3df" width={9} cap="round" />
      <Lines paths={["M24,1060H100L180,1070L220,1085"]} color="#aad3df" width={16} />
      <path
        d="M422,478H430M434,490H446M434,508H448M468,526H480M502,538H510M506,556H518M540,559H560M584,566H594M592,577H604M608,604H613"
        stroke="#3f9bf7"
        strokeWidth="3"
      />

      <Lines paths={TRACKS} color="#dfe8d2" width={4} />
      <Lines paths={MINOR} color="#bdbdb8" width={4} />
      <Lines paths={BORDERS} color="#9d7fa0" width={4} dash="18 6 5 6" />

      <Road paths={WHITE} casing="#c3c0bb" color="#ffffff" width={6} />
      <Road paths={YELLOW} casing="#c9cc78" color="#f7fabf" width={8} />
      <Road paths={ORANGE} casing="#d99c55" color="#fcd6a4" width={9} />
      <Road paths={RED} casing="#d9826a" color="#f9b29c" width={10} />
      <Lines paths={BYPASS} color="#ffffff" width={10} />
      <Lines paths={BYPASS} color="#f5a996" width={10} dash="10 12" />
      <Lines paths={RAIL} color="#707070" width={7} />
      <Lines paths={RAIL} color="#d8d8d8" width={3} dash="22 22" />
      <g fill="#7b7fb8">
        <rect x="1643" y="1250" width="13" height="13" />
        <rect x="2073" y="1251" width="13" height="13" />
        <rect x="1604" y="1350" width="13" height="13" />
        <rect x="1109" y="1509" width="13" height="13" />
      </g>
      <path d="M848,534L861,555H836Z" fill="#d08f55" />
      <path d="M1100,80L1120,75L1130,100L1115,120L1125,129H1100L1112,112Z" fill="none" stroke="#f9bdbd" strokeWidth="7" />
      <Plane x={1107} y={1407} />
      <Plane x={1862} y={1623} />

      <g
        className="font-['Noto_Sans',sans-serif]"
        textAnchor="middle"
        stroke="#ffffff"
        strokeOpacity="0.75"
        strokeWidth="6"
        strokeLinejoin="round"
        paintOrder="stroke"
      >
        {PLACES.map(([name, x, y, size]) => (
          <text key={name} x={x} y={y} fontSize={size} fill="#2b2b2b">
            {name}
          </text>
        ))}
        {ITALIC_PLACES.map(([name, x, y, size, color]) => (
          <text key={name} x={x} y={y} fontSize={size} fill={color} fontStyle="italic">
            {name}
          </text>
        ))}
      </g>

      <g className="font-['Noto_Sans',sans-serif]" textAnchor="middle">
        {SHIELDS.map(([name, x, y, w, bg, line, ink]) => (
          <g key={name}>
            <rect x={x} y={y} width={w} height="51" rx="6" fill={bg} stroke={line} strokeWidth="3" />
            <text x={x + w / 2} y={y + 37} fontSize="30" fill={ink}>
              {name}
            </text>
          </g>
        ))}
      </g>
    </svg>
  );
}

/* ---------- Route table ---------- */

const PLACE_OPTIONS = [
  "Октябрьский пр. 60, Псков, ру",
  "Генерала Маргелова, 41, Псков, ру",
  "Белинского 74А, Псков, ру",
  "Ижерского Батальона 24Г, Псков, ру",
];

const ROUTES = [
  { from: 0, to: 2, tone: "bg-[#fafafa]" },
  { from: 1, to: 3, tone: "bg-[#fcfcfc]" },
  { from: 2, to: 1, tone: "bg-white" },
  { from: 3, to: 0, tone: "bg-white" },
];

function Chevron({ className }) {
  return (
    <svg className={className} viewBox="0 0 12 12" fill="none" stroke="currentColor" aria-hidden="true">
      <path d="M1 2.5 6 9 11 2.5" />
    </svg>
  );
}

function Tick({ label }) {
  return (
    <input
      type="checkbox"
      aria-label={label}
      className="block size-4 appearance-none rounded-xs border border-[#d9d9d9] bg-white checked:border-[#1890ff] checked:bg-[#1890ff]"
    />
  );
}

function PlaceSelect({ value, label }) {
  return (
    <div className="relative w-60">
      <select
        aria-label={label}
        defaultValue={value}
        className="block h-8 w-full appearance-none truncate bg-transparent pr-7 pl-3 outline-none"
      >
        {PLACE_OPTIONS.map((name, i) => (
          <option key={name} value={i}>
            {name}
          </option>
        ))}
      </select>
      <Chevron className="pointer-events-none absolute top-2.5 right-[11px] size-3 text-black/30" />
    </div>
  );
}

function RouteTable() {
  return (
    <table className="w-full table-fixed border-collapse text-left text-[13px] leading-[22px]">
      <thead className="bg-[#fafafa]">
        <tr className="h-[54px] border-b border-[#f0f0f0]">
          <th className="w-8 pl-2">
            <Tick label="Select all" />
          </th>
          <th className="pt-0.5 pl-4 font-normal">
            <div className="border-r border-[#f0f0f0]">Loading place</div>
          </th>
          <th className="pt-0.5 pl-4 font-normal">Unloading place</th>
        </tr>
      </thead>
      <tbody>
        {ROUTES.map((route, i) => (
          <tr key={i} className={`h-[65px] border-b border-[#f0f0f0] ${route.tone}`}>
            <td className="pl-2">
              <Tick label={`Select route ${i + 1}`} />
            </td>
            <td className="pl-4">
              <PlaceSelect value={route.from} label="Loading place" />
            </td>
            <td className="pl-4">
              <PlaceSelect value={route.to} label="Unloading place" />
            </td>
          </tr>
        ))}
      </tbody>
    </table>
  );
}

function Pagination() {
  const box = "flex size-8 items-center justify-center rounded-xs border bg-white text-sm";
  return (
    <nav className="mt-4 flex justify-end gap-2" aria-label="Pagination">
      <button type="button" disabled aria-label="Previous page" className={`${box} border-[#d9d9d9] text-black/30`}>
        <Chevron className="size-3 rotate-90" />
      </button>
      <button type="button" aria-current="page" className={`${box} border-[#1890ff] text-[#1890ff]`}>
        1
      </button>
      <button type="button" disabled aria-label="Next page" className={`${box} border-[#d9d9d9] text-black/30`}>
        <Chevron className="size-3 -rotate-90" />
      </button>
    </nav>
  );
}

function MapPanel() {
  return (
    <section className="relative min-h-96 overflow-hidden bg-[#f2efe9]" aria-label="Map">
      <PskovMap />
      <div className="absolute top-2.5 left-2.5 flex flex-col rounded-sm border-2 border-black/20 bg-clip-padding font-['Liberation_Mono',monospace] text-2xl leading-[26px] font-bold text-black">
        <button type="button" aria-label="Zoom in" className="h-[31px] w-[30px] rounded-t-xs border-b border-[#ccc] bg-white pt-1">
          +
        </button>
        <button type="button" aria-label="Zoom out" className="h-[30px] w-[30px] rounded-b-xs bg-white pt-1">
          −
        </button>
      </div>
      <div className="absolute right-0 bottom-0 bg-white/70 px-[5px] font-['Liberation_Sans',sans-serif] text-[11px] leading-[17px] text-[#333]">
        <a href="#leaflet" className="text-[#0078a8]">
          Leaflet
        </a>{" "}
        | ©{" "}
        <a href="#osm" className="text-[#0078a8]">
          OpenStreetMap
        </a>{" "}
        contributors
      </div>
    </section>
  );
}

export default function App() {
  return (
    <div className="flex min-h-screen flex-col bg-white pt-12 pr-[18px] pb-11 pl-[26px] font-['Noto_Sans','Open_Sans',sans-serif] text-black/85">
      <h1 className="mb-[31px] text-center text-[26px] leading-[38px]">Transport logistics</h1>
      <main className="grid flex-1 grid-cols-2">
        <section aria-label="Routes">
          <RouteTable />
          <Pagination />
        </section>
        <MapPanel />
      </main>
    </div>
  );
}
